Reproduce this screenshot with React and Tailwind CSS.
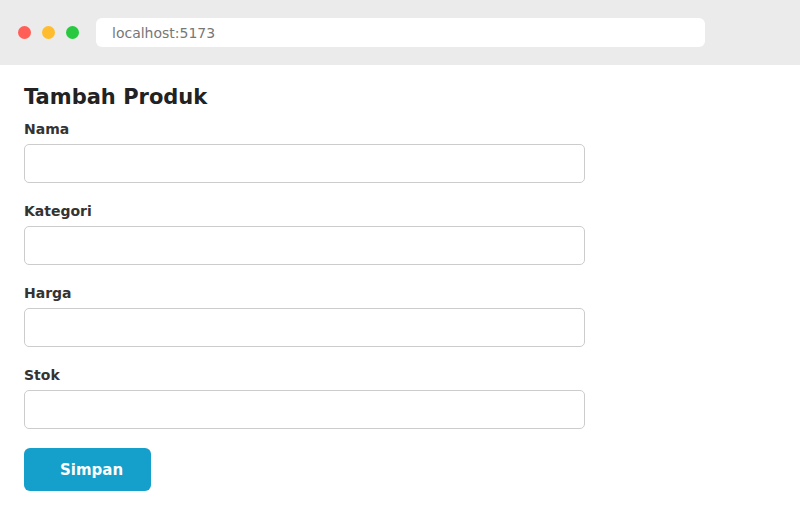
export default function App() {
  const fields = ["Nama", "Kategori", "Harga", "Stok"];

  return (
    <div className="w-[800px] h-[508px] bg-white font-['DejaVu_Sans',sans-serif] overflow-hidden">
      {/* Browser chrome */}
      <div className="h-[65px] bg-[#ebebeb] flex items-center px-[18px]">
        <div className="flex items-center gap-[11px]">
          <span className="w-[13px] h-[13px] rounded-full bg-[#ff5f57]" />
          <span className="w-[13px] h-[13px] rounded-full bg-[#febc2e]" />
          <span className="w-[13px] h-[13px] rounded-full bg-[#28c840]" />
        </div>
        <div className="ml-[17px] w-[609px] h-[29px] bg-white rounded-[6px] flex items-center px-4 pt-[1px] text-[14px] text-[#777]">
          localhost:5173
        </div>
      </div>

      {/* Page */}
      <div className="px-6 pt-[18px]">
        <h1 className="text-[21px] font-bold text-[#222] leading-[28px] mb-[9px]">Tambah Produk</h1>
        {fields.map((f) => (
          <div key={f} className="mb-[19px]">
            <label className="block text-[14px] font-bold text-[#333] leading-[16px] pt-[1px] mb-[7px]">{f}</label>
            <input
              type="text"
              className="block w-[561px] h-[39px] border border-[#ccc] rounded-[5px] px-3 outline-none"
            />
          </div>
        ))}
        <button className="w-[127px] h-[43px] bg-[#159fcb] text-white font-bold text-[15px] rounded-[6px] text-left pl-[36px] pt-[2px]">
          Simpan
        </button>
      </div>
    </div>
  );
}
